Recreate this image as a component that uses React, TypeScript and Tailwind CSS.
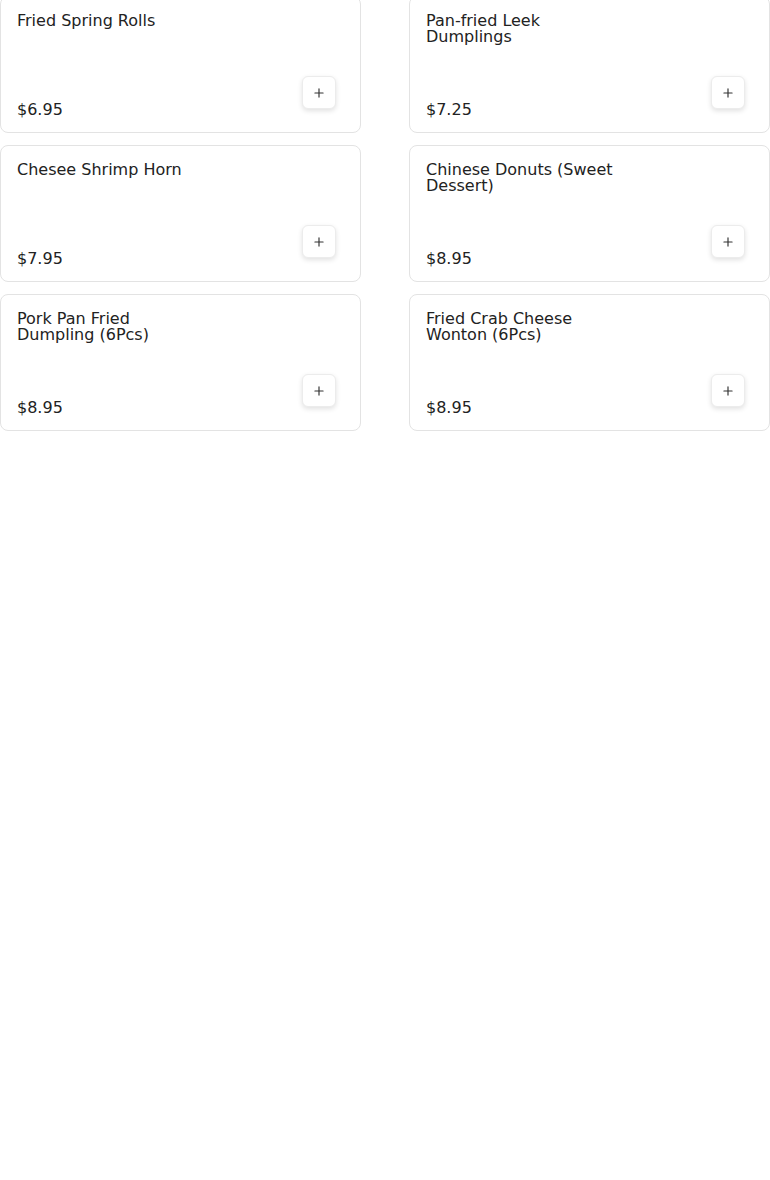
import { Plus } from 'lucide-react';

interface MenuItem {
  name: string;
  price: string;
}

const items: MenuItem[] = [
  { name: 'Fried Spring Rolls', price: '$6.95' },
  { name: 'Pan-fried Leek Dumplings', price: '$7.25' },
  { name: 'Chesee Shrimp Horn', price: '$7.95' },
  { name: 'Chinese Donuts (Sweet Dessert)', price: '$8.95' },
  { name: 'Pork Pan Fried Dumpling (6Pcs)', price: '$8.95' },
  { name: 'Fried Crab Cheese Wonton (6Pcs)', price: '$8.95' },
];

function MenuCard({ item }: { item: MenuItem }) {
  return (
    <div className="flex h-[137px] justify-between rounded-lg border border-[#e3e3e3] bg-white pl-4 pr-6 pt-4 pb-[14px]">
      {/* 名稱與價格 */}
      <div className="flex flex-col justify-between">
        <h3 className="max-w-[190px] text-[16px] leading-[16px] text-[#222]">{item.name}</h3>
        <span className="text-[16px] leading-[16px] text-[#222]">{item.price}</span>
      </div>

      {/* 加入按鈕 */}
      <button className="mb-[9px] flex h-[33px] w-[34px] items-center justify-center self-end rounded-md border border-[#ececec] bg-white shadow-[0_2px_5px_rgba(0,0,0,0.12)]">
        <Plus className="h-[14px] w-[14px] text-[#333]" strokeWidth={2} />
      </button>
    </div>
  );
}

export default function App() {
  return (
    <div className="min-h-[1180px] bg-white font-['DejaVu_Sans',sans-serif]">
      <div className="-mt-[4px] grid grid-cols-2 gap-x-[48px] gap-y-3">
        {items.map((item) => (
          <MenuCard key={item.name} item={item} />
        ))}
      </div>
    </div>
  );
}
